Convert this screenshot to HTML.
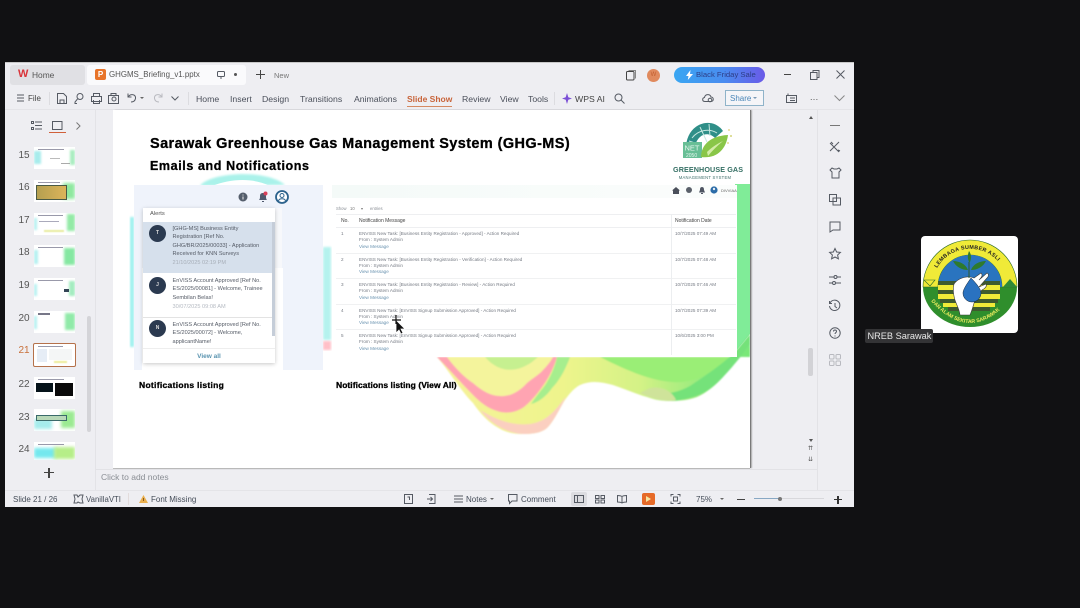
<!DOCTYPE html>
<html><head><meta charset="utf-8">
<style>
html,body{margin:0;padding:0;background:#111113}
#p{position:relative;width:1080px;height:608px;overflow:hidden;background:#111113;font-family:"Liberation Sans",sans-serif;filter:blur(.35px)}
#p div,#p span.a{position:absolute;white-space:nowrap}
.m{font-size:8px;color:#444c58}
.tb{font-size:8.700px;color:#4a4f5a;top:93px;line-height:12px}
.n{font-size:10px;color:#555;left:18px;width:12px;text-align:center;line-height:12px}
.th{left:34px;width:41px;height:22px;background:#fff;overflow:hidden}
.al{font-size:5.600px;line-height:8.400px;color:#555b66}
.tr{font-size:4.600px;color:#767b84;line-height:6.350px;left:359px}
.tr b{font-weight:normal;color:#6a93b0}
.dt{font-size:4.600px;color:#767b84;left:675px}
.no{font-size:4.600px;color:#767b84;left:341px}
.av{width:17px;height:17px;border-radius:50%;background:#2b3a50;left:149px;color:#ddd;font-size:5px;text-align:center;line-height:17px;font-weight:bold}
.b{font-family:"Liberation Sans",sans-serif;font-weight:bold;color:#000;-webkit-text-stroke:.3px #000}
svg{position:absolute;overflow:visible}
.ic path,.ic rect,.ic circle{fill:none;stroke:#555a63;stroke-width:1}
</style></head><body>
<div id="p">
<!-- window -->
<div style="left:5px;top:62px;width:849px;height:445px;background:#eeeef2"></div>
<div style="left:5px;top:62px;width:849px;height:1px;background:#c8c8c8"></div>

<!-- tabs -->
<div style="left:10px;top:65px;width:75px;height:20px;background:#e0e0e4;border-radius:3px"></div>
<div style="left:18px;top:68px;color:#d9343a;font-size:11px;font-weight:bold;line-height:12px;letter-spacing:-1px">W</div>
<div class="m" style="left:32px;top:70px;color:#555;font-size:8.400px">Home</div>
<div style="left:87px;top:65px;width:159px;height:20px;background:#fafafc;border-radius:3px"></div>
<div style="left:95px;top:69px;width:11px;height:11px;background:#e8742a;border-radius:2px;color:#fff;font-size:8px;line-height:11px;text-align:center;font-weight:bold">P</div>
<div class="m" style="left:109px;top:70px;color:#555;font-size:7.900px">GHGMS_Briefing_v1.pptx</div>
<svg class="ic" style="left:217px;top:71px" width="9" height="8"><rect x=".5" y=".5" width="7" height="5" rx="1"/><path d="M3 7h2"/></svg>
<div style="left:234px;top:73px;width:3px;height:3px;border-radius:50%;background:#555"></div>
<div style="left:256px;top:74px;width:9px;height:1.200px;background:#444"></div>
<div style="left:259.900px;top:70px;width:1.200px;height:9px;background:#444"></div>
<div style="left:274px;top:71px;font-size:7.500px;color:#777">New</div>

<!-- title bar right -->
<svg class="ic" style="left:626px;top:70px" width="10" height="10"><rect x=".5" y="1.5" width="7.5" height="8.5" rx="1" style="stroke:#444"/><path d="M2.5 .5h7v8" style="stroke:#888"/></svg>
<div style="left:647px;top:69px;width:13px;height:13px;border-radius:50%;background:#e08a5e;color:#c25f30;font-size:6px;line-height:13px;text-align:center">W</div>
<div style="left:674px;top:67px;width:91px;height:16px;border-radius:8px;background:linear-gradient(90deg,#39a6f2 0%,#4a8cf0 55%,#6a5ae8 100%)"></div>
<svg style="left:686px;top:70px" width="7" height="10"><path d="M4.500 0 0 6h2.500L1.800 10 7 4H4z" fill="#fff"/></svg>
<div style="left:696px;top:70px;font-size:7.700px;color:#2d3d86;line-height:10px">Black Friday Sale</div>
<div style="left:784px;top:74px;width:7px;height:1px;background:#444"></div>
<svg class="ic" style="left:810px;top:70px" width="10" height="10"><rect x=".5" y="2.5" width="6.5" height="7"/><path d="M3 2.5V.5h6v7H7"/></svg>
<svg class="ic" style="left:836px;top:70px" width="9" height="9"><path d="M.5.5l8 8M8.500.5l-8 8"/></svg>

<!-- menu row -->
<svg class="ic" style="left:17px;top:94px" width="7" height="8"><path d="M0 1h7M0 4h7M0 7h7"/></svg>
<div class="tb" style="left:28px;font-size:8px;color:#444">File</div>
<div style="left:49px;top:92px;width:1px;height:13px;background:#dcdce0"></div>
<svg class="ic" style="left:57px;top:93px" width="10" height="11"><path d="M.5.5h6l3 3v7h-9zM3 10.500V7h4v3.500"/></svg>
<svg class="ic" style="left:74px;top:93px" width="10" height="11"><circle cx="6" cy="3.500" r="3"/><path d="M3.500 6 1 9v1.500h2"/></svg>
<svg class="ic" style="left:91px;top:93px" width="11" height="11"><rect x=".5" y="3.500" width="10" height="5"/><path d="M2.500 3.500v-3h6v3M2.500 7v3.500h6V7"/></svg>
<svg class="ic" style="left:108px;top:93px" width="11" height="11"><path d="M.5 10.500v-8h10v8zM3 2.500V.5h5v2"/><circle cx="6" cy="6" r="2"/></svg>
<svg class="ic" style="left:127px;top:93px" width="10" height="10"><path d="M1 .5v3.500h3.500M1 4c3-4 8-2.500 7.500 1.500C8 8 6 9 4 9"/></svg>
<div style="left:140px;top:97px;border:2px solid transparent;border-top:2.500px solid #666"></div>
<svg class="ic" style="left:153px;top:93px;opacity:.35" width="10" height="10"><path d="M9 .5v3.500H5.500M9 4C6 0 1 1.500 1.500 5.500 2 8 4 9 6 9"/></svg>
<svg class="ic" style="left:171px;top:96px" width="8" height="5"><path d="M.5.5 4 4 7.500.5"/></svg>
<div style="left:188px;top:92px;width:1px;height:13px;background:#dcdce0"></div>
<div class="tb" style="left:196px">Home</div>
<div class="tb" style="left:230px">Insert</div>
<div class="tb" style="left:262px">Design</div>
<div class="tb" style="left:300px">Transitions</div>
<div class="tb" style="left:354px">Animations</div>
<div class="tb" style="left:407px;color:#c8643a;font-weight:bold;font-size:8.500px">Slide Show</div>
<div style="left:407px;top:106px;width:45px;height:1px;background:#d58a62"></div>
<div class="tb" style="left:462px">Review</div>
<div class="tb" style="left:500px">View</div>
<div class="tb" style="left:528px">Tools</div>
<div style="left:554px;top:92px;width:1px;height:13px;background:#dcdce0"></div>
<svg style="left:562px;top:93px" width="10" height="11"><path d="M5 0 6.300 4.300 10 5.500 6.300 6.700 5 11 3.700 6.700 0 5.500 3.700 4.300z" fill="#7b4fd6"/></svg>
<div class="tb" style="left:575px;color:#444">WPS AI</div>
<svg class="ic" style="left:614px;top:93px" width="11" height="11"><circle cx="4.500" cy="4.500" r="3.500"/><path d="M7 7l3.500 3.500"/></svg>
<svg class="ic" style="left:702px;top:93px" width="12" height="10"><path d="M3 8.500C0 8.500 0 5 2.500 4.500 3 1 8 .5 9 4c3 0 3 4.500 0 4.500z"/><circle cx="8" cy="7" r="1.800"/></svg>
<div style="left:725px;top:90px;width:37px;height:14px;border:1px solid #8fb3c9;background:#f5f5f8"></div>
<div style="left:730px;top:93.500px;font-size:8px;color:#4a86b8;line-height:10px">Share</div>
<div style="left:753px;top:96.500px;border:2px solid transparent;border-top:2.500px solid #7a9ab5"></div>
<svg class="ic" style="left:786px;top:93px" width="11" height="10"><path d="M.5 2.500h10v7h-10zM2 2.500V.5M4 5h5M4 7.500h5"/></svg>
<div style="left:810px;top:93px;font-size:9px;color:#555;line-height:8px;letter-spacing:.3px">...</div>
<svg class="ic" style="left:834px;top:95px" width="11" height="6"><path d="M.5.5l5 5 5-5" style="stroke:#888"/></svg>
<div style="left:5px;top:109px;width:849px;height:1px;background:#e4e4e8"></div>

<!-- left pane -->
<div style="left:95px;top:110px;width:1px;height:380px;background:#e3e3e7"></div>
<svg class="ic" style="left:31px;top:121px" width="11" height="9"><path d="M4 1h7M4 4.500h7M4 8h7M.5.5h2v2h-2zM.5 6.500h2v2h-2z"/></svg>
<svg class="ic" style="left:52px;top:121px" width="11" height="9"><rect x=".5" y=".5" width="9.500" height="8"/></svg>
<div style="left:49px;top:132px;width:17px;height:1px;background:#d0603a"></div>
<svg class="ic" style="left:76px;top:122px" width="5" height="8"><path d="M.5.5 4 4 .5 7.500" style="stroke:#777"/></svg>

<div class="n" style="top:150px">15</div>
<div class="th" style="top:147px"><div style="left:0;top:4px;width:7px;height:13px;background:#a8ecec;filter:blur(1px)"></div><div style="right:0;top:3px;width:5px;height:15px;background:#a9edc0;filter:blur(1px)"></div><div style="left:4px;top:2px;width:26px;height:1px;background:#99a"></div><div style="left:16px;top:11px;width:10px;height:1px;background:#bbb"></div><div style="left:27px;top:16px;width:9px;height:1px;background:#aaa"></div></div>
<div class="n" style="top:182px">16</div>
<div class="th" style="top:180px"><div style="right:0;top:3px;width:12px;height:16px;background:#8fe8a0;filter:blur(1.500px)"></div><div style="left:2px;top:5px;width:29px;height:13px;background:linear-gradient(90deg,#b5a050,#dcb45a);border:1px solid #4a5a45"></div><div style="left:4px;top:2px;width:22px;height:1px;background:#99a"></div></div>
<div class="n" style="top:215px">17</div>
<div class="th" style="top:213px"><div style="right:0;top:1px;width:8px;height:17px;background:#93eaa6;filter:blur(1.200px)"></div><div style="left:0;top:5px;width:3px;height:12px;background:#b4f0f0;filter:blur(1px)"></div><div style="left:10px;top:17px;width:20px;height:2px;background:#e8eca0;filter:blur(.6px)"></div><div style="left:4px;top:2px;width:25px;height:1px;background:#99a"></div><div style="left:5px;top:8px;width:20px;height:1px;background:#aab"></div></div>
<div class="n" style="top:247px">18</div>
<div class="th" style="top:245px"><div style="right:0;top:3px;width:11px;height:17px;background:#85e8a2;filter:blur(1.200px)"></div><div style="left:0;top:5px;width:4px;height:14px;background:#b4f0f0;filter:blur(1px)"></div><div style="left:4px;top:2px;width:25px;height:1px;background:#99a"></div></div>
<div class="n" style="top:280px">19</div>
<div class="th" style="top:278px"><div style="right:0;top:3px;width:6px;height:15px;background:#a4ecc0;filter:blur(1px)"></div><div style="left:0;top:6px;width:3px;height:12px;background:#b4f0f0;filter:blur(1px)"></div><div style="left:30px;top:11px;width:5px;height:3px;background:#345"></div><div style="left:4px;top:2px;width:25px;height:1px;background:#99a"></div></div>
<div class="n" style="top:313px">20</div>
<div class="th" style="top:311px"><div style="right:0;top:2px;width:10px;height:17px;background:#90eaa8;filter:blur(1.200px)"></div><div style="left:0;top:5px;width:3px;height:13px;background:#b4f0f0;filter:blur(1px)"></div><div style="left:4px;top:2px;width:12px;height:1.500px;background:#778"></div></div>
<div class="n" style="top:345px;color:#c8703a">21</div>
<div style="left:33px;top:343px;width:41px;height:22px;background:#fff;border:1.500px solid #b5714a;border-radius:2px;overflow:hidden"><div style="left:3px;top:5px;width:10px;height:13px;background:#e6edf6"></div><div style="left:15px;top:5px;width:23px;height:11px;background:#f4f6f6"></div><div style="left:20px;top:17px;width:13px;height:2px;background:#ecec98;filter:blur(.6px)"></div><div style="left:4px;top:2px;width:25px;height:1px;background:#99a"></div></div>
<div class="n" style="top:379px">22</div>
<div class="th" style="top:377px"><div style="left:2px;top:6px;width:17px;height:9px;background:#06131a"></div><div style="left:21px;top:6px;width:18px;height:13px;background:#0a0a0a"></div><div style="left:4px;top:2px;width:26px;height:1px;background:#99a"></div></div>
<div class="n" style="top:412px">23</div>
<div class="th" style="top:409px"><div style="right:0;top:2px;width:14px;height:17px;background:#9bea92;filter:blur(1.500px)"></div><div style="left:0;top:10px;width:18px;height:10px;background:#a5ecec;filter:blur(1.500px)"></div><div style="left:2px;top:6px;width:29px;height:4px;background:#b8d8b8;border:1px solid #3a6a6a"></div></div>
<div class="n" style="top:444px">24</div>
<div class="th" style="top:442px;height:18px"><div style="left:0;top:6px;width:22px;height:10px;background:#74e8ee;filter:blur(1.500px)"></div><div style="left:20px;top:5px;width:21px;height:12px;background:#b6ee88;filter:blur(1.500px)"></div><div style="left:4px;top:2px;width:26px;height:1px;background:#99a"></div></div>

<div style="left:87px;top:316px;width:4px;height:116px;background:#d4d4d8;border-radius:2px"></div>
<div style="left:44px;top:472px;width:10px;height:1.300px;background:#444"></div>
<div style="left:48.400px;top:467.500px;width:1.300px;height:10px;background:#444"></div>

<!-- slide -->
<div style="left:113px;top:110px;width:637px;height:358px;background:#fff;overflow:hidden;box-shadow:1px 0 0 #7a7a7a,2px 0 1px #aaa,0 1px 0 #bdbdbd">
  <svg style="left:0;top:0" width="637" height="358" viewBox="113 110 637 358">
    <defs>
      <filter id="s"><feGaussianBlur stdDeviation="1"/></filter>
      <filter id="s2"><feGaussianBlur stdDeviation=".7"/></filter>
      <linearGradient id="w" gradientUnits="userSpaceOnUse" x1="437" x2="750" y1="0" y2="0"><stop offset="0" stop-color="#f6f29a"/><stop offset=".4" stop-color="#eef48c"/><stop offset=".65" stop-color="#d4f286"/><stop offset=".9" stop-color="#86e97a"/><stop offset="1" stop-color="#78e878"/></linearGradient>
    </defs>
    <path d="M200 186c8-13 65-18 85-1z" fill="#aaf2ea" filter="url(#s)"/>
    <path d="M212 186c20-8 42-8 58 0z" fill="#fff"/>
    <path d="M130 217h4v130h-4z" fill="#9cf0ee" filter="url(#s)"/>
    <path d="M323 247h8v93h-8z" fill="#b5f2ee" filter="url(#s)"/>
    <path d="M323 341h8v9h-8z" fill="#ffc0c8" filter="url(#s)"/>
    <path d="M735 184h15v150l-15 18z" fill="#80ec98"/>
    <g filter="url(#s2)">
    <path d="M437 357C450 372 460 390 473 403 482 416 490 423 497 427 506 433 515 434 523 434 533 434 541 433 547 428 553 422 558 412 563 403 568 395 574 388 580 385 591 380 602 382 613 385 625 389 636 394 647 397 655 400 662 401 670 401 680 401 689 400 697 397 706 393 715 386 723 377L750 345V357z" fill="url(#w)"/>
    <path d="M480 410C490 423 506 433 523 434 533 434 541 433 547 428 553 422 558 412 563 403L566 396C555 412 545 422 530 424 512 426 497 420 480 410z" fill="#fbcfc0"/>
    <path d="M437 357C450 370 462 384 473 395 480 402 487 408 497 411 506 414 515 413 524 407 533 400 542 388 548 378 552 371 555 364 557 357z" fill="#ffa4b2"/>
    <path d="M447 357C455 368 465 378 473 383 482 391 491 396 500 396 510 397 520 391 527 383 533 378 540 374 543 370 547 366 551 361 553 357z" fill="#f4f49c"/>
    <path d="M485 357C498 372 515 374 532 362L538 357z" fill="#c6f090"/>
    <path d="M557 357C555 368 548 382 543 388 539 393 535 398 531 404 540 402 548 394 552 388 560 380 566 368 570 357z" fill="#a6ee8e"/>
    <path d="M600 357C630 372 650 380 672 382 696 384 716 370 732 357z" fill="#9aee76"/>
    <path d="M648 394C660 400 670 402 680 400 692 398 702 395 712 387 724 378 738 360 750 345V334L735 352C720 366 705 376 690 386 678 393 662 395 648 394z" fill="#74e27a"/>
    <path d="M640 393C655 400 668 402 676 400 672 391 662 386 650 388z" fill="#cfe39a"/>
    </g>
  </svg>

  <div class="b" style="left:37px;top:25.500px;font-size:14.500px;line-height:17px;letter-spacing:.4px">Sarawak Greenhouse Gas Management System (GHG-MS)</div>
  <div class="b" style="left:37px;top:49px;font-size:12.500px;line-height:15px;letter-spacing:.6px">Emails and Notifications</div>

  <!-- logo -->
  <svg style="left:570px;top:12px" width="55" height="44" viewBox="683 122 55 44">
    <path d="M686 146c2-24 27-30 37-15l-8 7c-7-7-17-4-20 8z" fill="#2f8f88"/>
    <path d="M692 138c6-8 17-10 25-5M700 127l7 15M709 124l1 12M689 141l12 4" stroke="#c6e8e0" fill="none" stroke-width="1"/>
    <rect x="683" y="142" width="19" height="16" fill="#68bf96"/>
    <text x="684.500" y="150.500" font-size="7.500" fill="#e5f6ee" font-family="Liberation Sans">NET</text>
    <text x="686" y="157" font-size="5" fill="#e5f6ee" font-family="Liberation Sans">2050</text>
    <path d="M701 157c0-10 7-21 27-22-2 15-12 24-27 22z" fill="#89c648"/>
    <path d="M707 152c5-5 10-8 16-11-6 5-11 10-15 15z" fill="#d3eca8"/>
    <circle cx="729" cy="130" r="1" fill="#e6d894"/><circle cx="731" cy="136" r="1" fill="#d4d47a"/><circle cx="728" cy="143" r="1" fill="#e6d894"/>
  </svg>
  <div style="left:560px;top:55px;width:64px;text-align:center;font-size:7.200px;font-weight:bold;color:#356f64;line-height:9px;letter-spacing:.1px">GREENHOUSE GAS</div>
  <div style="left:560px;top:65px;width:64px;text-align:center;font-size:4.200px;color:#3d6d6a;line-height:5px;letter-spacing:.25px">MANAGEMENT SYSTEM</div>

  <!-- alerts panel -->
  <div style="left:21px;top:75px;width:189px;height:185px;background:#eff3fb"></div>
  <div style="left:29px;top:158px;width:141px;height:102px;background:#fff"></div>
  <div style="left:162px;top:98px;width:7px;height:60px;background:#f7f8fb"></div>
  <div style="left:30px;top:98px;width:132px;height:155px;background:#fff;box-shadow:0 1px 4px rgba(0,0,0,.22)"></div>
  <div style="left:37px;top:100px;font-size:5.800px;color:#555;line-height:9px">Alerts</div>
  <div style="left:30px;top:112px;width:132px;height:51px;background:#d6e0ec"></div>
  <div style="left:30px;top:207px;width:132px;height:1px;background:#e3e3e3"></div>
  <div style="left:30px;top:238px;width:132px;height:1px;background:#eee"></div>
  <div style="left:159px;top:112px;width:3px;height:114px;background:#c5cdd8"></div>
</div>

<div class="av" style="top:225px">T</div>
<div class="av" style="top:277px">J</div>
<div class="av" style="top:320px">N</div>
<div class="al" style="left:172.500px;top:225px">[GHG-MS] Business Entity<br>Registration [Ref No.<br>GHG/BR/2025/00033] - Application<br>Received for KNN Surveys</div>
<div class="al" style="left:172.500px;top:259px;color:#a7aeb8">21/10/2025 02:19 PM</div>
<div class="al" style="left:172.500px;top:277px">EnVISS Account Approved [Ref No.<br>ES/2025/00081] - Welcome, Trainee<br>Sembilan Belas!</div>
<div class="al" style="left:172.500px;top:303px;color:#b5bac2">30/07/2025 09:08 AM</div>
<div class="al" style="left:172.500px;top:321px">EnVISS Account Approved [Ref No.<br>ES/2025/00072] - Welcome,<br>applicantName!</div>
<div style="left:143px;top:352px;width:132px;text-align:center;font-size:6.500px;font-weight:bold;color:#5a94b0;line-height:9px">View all</div>
<svg style="left:238px;top:192px" width="10" height="10"><circle cx="5" cy="5" r="4.500" fill="#555e6c"/><path d="M5 2.500v1M5 4.500v3" stroke="#eee"/></svg>
<svg style="left:258px;top:191px" width="10" height="12"><path d="M1 9c1-1 1-2 1-4 0-2 1-3 3-3s3 1 3 3c0 2 0 3 1 4zM4 10h2v1H4z" fill="#4f5a6e"/><circle cx="7.500" cy="2.500" r="2" fill="#d8405a"/></svg>
<svg style="left:275px;top:190px" width="14" height="14"><circle cx="7" cy="7" r="6" fill="#fff" stroke="#2c628c" stroke-width="1.800"/><circle cx="7" cy="5.500" r="2" fill="none" stroke="#2c628c"/><path d="M3.500 11c.5-3 6.500-3 7 0" fill="none" stroke="#2c628c"/></svg>
<div class="b" style="left:139px;top:380px;font-size:8.500px;line-height:11px;letter-spacing:.3px">Notifications listing</div>

<!-- table panel -->
<div style="left:332px;top:185px;width:405px;height:172px;background:#fff"></div>
<div style="left:332px;top:185px;width:405px;height:13px;background:linear-gradient(90deg,#f4faf8,#fbfdfc)"></div>
<svg style="left:672px;top:187px" width="8" height="7"><path d="M4 0 8 3.500H7V7H1V3.500H0z" fill="#4a4f5a"/></svg>
<div style="left:686px;top:187px;width:6px;height:6px;border-radius:50%;background:#5a606a"></div>
<svg style="left:699px;top:187px" width="6" height="7"><path d="M3 0c2 0 2 2 2 3l1 2.500H0L1 3c0-1 0-3 2-3zM2 6h2v1H2z" fill="#4f5563"/></svg>
<svg style="left:710px;top:186px" width="8" height="8"><circle cx="4" cy="4" r="3.600" fill="#2c6ca8"/><circle cx="4" cy="3" r="1.200" fill="#e6eef6"/></svg>
<div style="left:721px;top:188px;font-size:4px;color:#666;line-height:5px">DIVVIAA</div>
<div style="left:336px;top:206px;font-size:4.200px;color:#8a8f96;line-height:6px">Show</div>
<div style="left:350px;top:206px;font-size:4.200px;color:#777;line-height:6px">10</div>
<div style="left:361px;top:208px;border:1.500px solid transparent;border-top:2px solid #777"></div>
<div style="left:370px;top:206px;font-size:4.200px;color:#8a8f96;line-height:6px">entries</div>
<div style="left:336px;top:214px;width:400px;height:1px;background:#eeeff1"></div>
<div style="left:336px;top:227px;width:400px;height:1px;background:#eeeff1"></div>
<div style="left:336px;top:253px;width:400px;height:1px;background:#f0f1f2"></div>
<div style="left:336px;top:278px;width:400px;height:1px;background:#f0f1f2"></div>
<div style="left:336px;top:304px;width:400px;height:1px;background:#f0f1f2"></div>
<div style="left:336px;top:329px;width:400px;height:1px;background:#f0f1f2"></div>
<div style="left:671px;top:214px;width:1px;height:141px;background:#eceef0"></div>
<div class="no" style="top:218px;color:#444;font-size:5px">No.</div>
<div class="tr" style="top:218px;color:#444;font-size:5px">Notification Message</div>
<div class="dt" style="top:218px;color:#444;font-size:5px">Notification Date</div>

<div class="no" style="top:231px">1</div>
<div class="tr" style="top:231px">ENVISS New Task: [Business Entity Registration - Approved] - Action Required<br>From : System Admin<br><b>View Message</b></div>
<div class="dt" style="top:231px">10/7/2025 07:49 AM</div>
<div class="no" style="top:256.500px">2</div>
<div class="tr" style="top:256.500px">ENVISS New Task: [Business Entity Registration - Verification] - Action Required<br>From : System Admin<br><b>View Message</b></div>
<div class="dt" style="top:256.500px">10/7/2025 07:48 AM</div>
<div class="no" style="top:282px">3</div>
<div class="tr" style="top:282px">ENVISS New Task: [Business Entity Registration - Review] - Action Required<br>From : System Admin<br><b>View Message</b></div>
<div class="dt" style="top:282px">10/7/2025 07:46 AM</div>
<div class="no" style="top:307.500px">4</div>
<div class="tr" style="top:307.500px">ENVISS New Task: [EnVISS Signup Submission Approved] - Action Required<br>From : System Admin<br><b>View Message</b></div>
<div class="dt" style="top:307.500px">10/7/2025 07:39 AM</div>
<div class="no" style="top:333px">5</div>
<div class="tr" style="top:333px">ENVISS New Task: [EnVISS Signup Submission Approved] - Action Required<br>From : System Admin<br><b>View Message</b></div>
<div class="dt" style="top:333px">10/6/2025 3:00 PM</div>

<svg style="left:391px;top:314px" width="14" height="21"><path d="M5 6v13l3-3 2 4 2-1-2-4h4z" fill="#111" stroke="#fff" stroke-width=".8"/><path d="M1 6h9M5 1v9" stroke="#111" stroke-width="1.200"/></svg>
<div class="b" style="left:336px;top:380px;font-size:8.500px;line-height:11px;letter-spacing:.05px">Notifications listing (View All)</div>

<!-- right scroll + rail -->
<div style="left:817px;top:110px;width:1px;height:380px;background:#e2e2e6"></div>
<div style="left:809px;top:114px;border:2px solid transparent;border-bottom:3px solid #555"></div>
<div style="left:808px;top:348px;width:5px;height:28px;background:#d2d2d6;border-radius:2px"></div>
<div style="left:809px;top:439px;border:2px solid transparent;border-top:3px solid #555"></div>
<div style="left:808px;top:446px;font-size:6px;color:#555;line-height:6px;letter-spacing:-.5px">&#8648;</div>
<div style="left:808px;top:457px;font-size:6px;color:#555;line-height:6px">&#8650;</div>

<div style="left:830px;top:125px;width:10px;height:1px;background:#777"></div>
<svg class="ic" style="left:829px;top:141px" width="12" height="12"><path d="M1 2l9 9M10 1 1 10M2 1l2 2M9 9l2 1"/></svg>
<svg class="ic" style="left:829px;top:167px" width="12" height="12"><path d="M3 1 1 3l2 2v6h7V5l2-2-2-2-2 1H5z"/></svg>
<svg class="ic" style="left:829px;top:194px" width="12" height="12"><rect x=".5" y=".5" width="7" height="7"/><rect x="4" y="4" width="7.500" height="7"/></svg>
<svg class="ic" style="left:829px;top:221px" width="12" height="12"><path d="M1 1h10v8H4L1 11z"/></svg>
<svg class="ic" style="left:829px;top:248px" width="12" height="12"><path d="M6 .5 7.600 4l3.800.4-2.800 2.600.8 3.800L6 9 2.600 10.800l.8-3.800L.6 4.400 4.400 4z"/></svg>
<svg class="ic" style="left:829px;top:274px" width="12" height="12"><path d="M0 3h5M8 3h4M0 9h3M7 9h5"/><circle cx="6.500" cy="3" r="1.500"/><circle cx="5" cy="9" r="1.500"/></svg>
<svg class="ic" style="left:829px;top:300px" width="12" height="12"><path d="M1 3a5.200 5.200 0 1 1-.5 3M6 3v3.500L8 8M.5 1v2.500H3"/></svg>
<svg class="ic" style="left:829px;top:327px" width="12" height="12"><circle cx="6" cy="6" r="5.200"/><path d="M4.500 4.500c0-2 3-2 3 0 0 1.200-1.500 1.200-1.500 2.500M6 8.500v1"/></svg>
<svg class="ic" style="left:829px;top:354px;opacity:.35" width="12" height="12"><rect x=".5" y=".5" width="4.500" height="4.500" rx="1"/><rect x="7" y=".5" width="4.500" height="4.500" rx="1"/><rect x=".5" y="7" width="4.500" height="4.500" rx="1"/><rect x="7" y="7" width="4.500" height="4.500" rx="1"/></svg>

<!-- notes -->
<div style="left:96px;top:469px;width:721px;height:1px;background:#e2e2e6"></div>
<div style="left:101px;top:472px;font-size:8.500px;color:#8a8e94;line-height:11px">Click to add notes</div>
<div style="left:5px;top:490px;width:849px;height:1px;background:#e4e4e8"></div>

<!-- status -->
<div class="m" style="left:13px;top:494px;line-height:11px">Slide 21 / 26</div>
<svg class="ic" style="left:73px;top:494px" width="11" height="10"><path d="M1 1h3l1 2 2-2h3L9 5l1 4H7L5 8 4 9H1l1-4z"/></svg>
<div class="m" style="left:86px;top:494px;font-size:7.800px;line-height:11px">VanillaVTI</div>
<div style="left:128px;top:493px;width:1px;height:12px;background:#e2dcdc"></div>
<svg style="left:139px;top:495px" width="9" height="8"><path d="M4.500 0 9 8H0z" fill="#eab04e"/><path d="M4.500 3v3" stroke="#8a5a20"/></svg>
<div class="m" style="left:151px;top:494px;line-height:11px">Font Missing</div>
<svg class="ic" style="left:404px;top:494px" width="9" height="10"><rect x=".5" y=".5" width="8" height="9"/><path d="M3.500 3h2v3"/></svg>
<svg class="ic" style="left:427px;top:494px" width="9" height="10"><path d="M2 .5h6v9H2M0 5h5M3.500 3 5.500 5 3.500 7"/></svg>
<svg class="ic" style="left:454px;top:495px" width="9" height="8"><path d="M0 1h9M0 4h9M0 7h9"/></svg>
<div class="m" style="left:466px;top:494px;line-height:11px">Notes</div>
<div style="left:490px;top:498px;border:2px solid transparent;border-top:2.500px solid #666"></div>
<svg class="ic" style="left:508px;top:494px" width="10" height="10"><path d="M.5.5h8.500v6.500H4L1.500 9.500V7H.5z"/></svg>
<div class="m" style="left:521px;top:494px;line-height:11px">Comment</div>
<div style="left:571px;top:492px;width:16px;height:14px;background:#dcdce0;border-radius:2px"></div>
<svg class="ic" style="left:574px;top:495px" width="10" height="8"><rect x=".5" y=".5" width="9" height="7"/><path d="M3.500.5v7"/></svg>
<svg class="ic" style="left:595px;top:495px" width="10" height="8"><rect x=".5" y=".5" width="3.500" height="3"/><rect x="6" y=".5" width="3.500" height="3"/><rect x=".5" y="5" width="3.500" height="3"/><rect x="6" y="5" width="3.500" height="3"/></svg>
<svg class="ic" style="left:617px;top:495px" width="10" height="8"><path d="M5 1.500C3.500.5 2 .5.500.5v6.500c1.500 0 3 0 4.500 1 1.500-1 3-1 4.500-1V.5C8 .5 6.500.5 5 1.500zM5 1.500V8"/></svg>
<div style="left:642px;top:493px;width:13px;height:12px;background:#e66a28;border-radius:2px"></div>
<svg style="left:646px;top:496px" width="5" height="6"><path d="M0 0 5 3 0 6z" fill="#f6e6a0"/></svg>
<svg class="ic" style="left:671px;top:494px" width="9" height="10"><path d="M0 2.500V.5h2.500M6.500.5H9v2M9 7.500v2H6.500M2.500 9.500H0v-2"/><rect x="2.500" y="3" width="4" height="4"/></svg>
<div class="m" style="left:696px;top:494px;line-height:11px">75%</div>
<div style="left:720px;top:498px;border:2px solid transparent;border-top:2.500px solid #666"></div>
<div style="left:737px;top:499px;width:8px;height:1.300px;background:#444"></div>
<div style="left:754px;top:498px;width:70px;height:1px;background:#d8d8dc"></div>
<div style="left:754px;top:498px;width:25px;height:1px;background:#88a8c4"></div>
<div style="left:778px;top:496.500px;width:4px;height:4px;border-radius:50%;background:#777"></div>
<div style="left:834px;top:499px;width:8px;height:1.300px;background:#333"></div>
<div style="left:837.400px;top:496px;width:1.300px;height:7.500px;background:#333"></div>

<!-- participant tile -->
<div style="left:921px;top:236px;width:97px;height:97px;background:#fff;border-radius:4px;overflow:hidden">
<svg style="left:0;top:0" width="97" height="97" viewBox="921 236 97 97">
  <path d="M923 287h94a47 40 0 0 1-94 0z" fill="#2f8e2c"/>
  <path d="M923 287A47 47 0 0 1 1017 287H1002A32 32 0 0 0 938 287z" fill="#f0ea38" stroke="#2b6a2a" stroke-width=".6"/>
  <path d="M938 287A32 32 0 0 1 1002 287z" fill="#2a74bf"/>
  <path d="M924 280h11l-5 6z" fill="#f0ea38" stroke="#2a6a2a" stroke-width=".6"/>
  <path d="M1003 287l7-8 7 8z" fill="#2f8a38"/>
  <rect x="938" y="281" width="62" height="4" fill="#3e5a2e"/>
  <rect x="938" y="285" width="62" height="5" fill="#f0ea38"/>
  <rect x="938" y="290" width="62" height="4" fill="#3e5a2e"/>
  <rect x="938" y="294" width="62" height="5" fill="#f0ea38"/>
  <rect x="940" y="299" width="58" height="4" fill="#3e5a2e"/>
  <rect x="943" y="303" width="52" height="4" fill="#f0ea38"/>
  <rect x="948" y="307" width="42" height="4" fill="#3e5a2e"/>
  <path d="M954 284c4-6 14-9 20-6l7-5c2 2 1 4-2 7l8-7c2 1 2 3 0 5l-8 9 7-3c1 2 0 4-4 6l-6 6c-2 7-3 12-6 19h-10c-1-8-5-12-6-19-1-5-1-8 0-12z" fill="#fff" stroke="#3a3a3a" stroke-width=".6"/>
  <path d="M971 278c7 7 10 12 10 15a9 9 0 0 1-18 0c0-3 3-8 8-15z" fill="#2a72c0" stroke="#123" stroke-width=".5"/>
  <path d="M969 262c-2-5-1-8 0-11 2 3 3 6 1 11zM968 270c-6 0-12-3-15-9 6 0 13 3 15 9zM971 270c6 0 12-3 15-9-6 0-13 3-15 9z" fill="#2e7a2e"/>
  <path d="M969 262v16" stroke="#2e5a2e"/>
  <path id="tp1" d="M937 268A38 38 0 0 1 1003 268" fill="none"/>
  <path id="tp2" d="M931 301Q970 345 1009 301" fill="none"/>
  <text font-size="5.400" font-weight="bold" fill="#222" font-family="Liberation Sans" letter-spacing=".3"><textPath href="#tp1">LEMBAGA SUMBER ASLI</textPath></text>
  <text font-size="5.200" font-weight="bold" fill="#ecec60" font-family="Liberation Sans"><textPath href="#tp2">DAN ALAM SEKITAR SARAWAK</textPath></text>
</svg>
</div>
<div style="left:865px;top:329px;width:68px;height:14px;background:#343436;border-radius:2px"></div>
<div style="left:867.500px;top:330px;font-size:9.200px;color:#e8e8e8;line-height:12px">NREB Sarawak</div>
</div>
</body></html>
